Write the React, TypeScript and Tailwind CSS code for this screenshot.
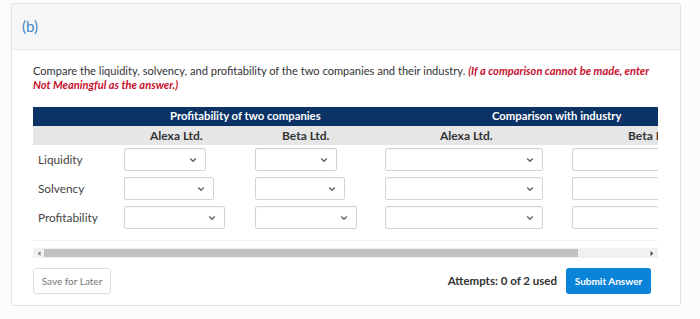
import React from "react";

const rows = [
  { label: "Liquidity", a: 82, b: 82 },
  { label: "Solvency", a: 90, b: 90 },
  { label: "Profitability", a: 101, b: 102 },
];

function Chevron() {
  return (
    <svg width="8" height="6" viewBox="0 0 8 6" className="shrink-0">
      <path d="M1.2 1.5 L4 4.3 L6.8 1.5" fill="none" stroke="#666" strokeWidth="1.4" />
    </svg>
  );
}

function Select({ width, arrow = true }: { width: number; arrow?: boolean }) {
  return (
    <div
      className="h-[23px] border border-[#d4d4d4] rounded-[2px] bg-white flex items-center justify-end pr-[8px] shadow-[inset_0_1px_1px_rgba(0,0,0,0.04)]"
      style={{ width }}
    >
      {arrow && <Chevron />}
    </div>
  );
}

export default function App() {
  return (
    <div
      className="w-[700px] h-[319px] bg-[#fcfcfc] pt-[3px] pl-[11px] overflow-hidden"
      style={{ fontFamily: "Lato, 'Open Sans', sans-serif" }}
    >
      <div className="w-[670px] h-[303px] bg-white border border-[#e3e3e3] rounded-[2px]">
        <div className="h-[46px] bg-[#f6f6f6] border-b border-[#e6e6e6] flex items-center pl-[10px]">
          <span className="text-[15px] text-[#3f86c8]">(b)</span>
        </div>

        <div className="pl-[21px] pt-[14px]">
          <p className="text-[11.1px] leading-[14px] text-[#333] w-[635px]">
            Compare the liquidity, solvency, and profitability of the two companies and their industry.{" "}
            <em className="font-bold text-[#c8102e]">
              (If a comparison cannot be made, enter Not Meaningful as the answer.)
            </em>
          </p>

          <div className="mt-[15px] w-[625px] overflow-hidden">
            <div className="w-[800px]">
              <div className="h-[19px] bg-[#0b3366] text-white text-[11.3px] font-bold flex items-center whitespace-nowrap">
                <div className="w-[459px] pl-[137px]">Profitability of two companies</div>
                <div>Comparison with industry</div>
              </div>
              <div className="h-[19px] bg-[#e6e6e6] text-[#333] text-[12px] font-bold flex items-center whitespace-nowrap">
                <div className="w-[91px]" />
                <div className="w-[131px] pl-[26px]">Alexa Ltd.</div>
                <div className="w-[130px] pl-[27px]">Beta Ltd.</div>
                <div className="w-[187px] pl-[55px]">Alexa Ltd.</div>
                <div className="w-[200px] pl-[56px]">Beta Ltd.</div>
              </div>
              {rows.map((r) => (
                <div key={r.label} className="h-[29px] flex items-center text-[11.8px] text-[#444]">
                  <div className="w-[91px] pl-[5px]">{r.label}</div>
                  <div className="w-[131px]">
                    <Select width={r.a} />
                  </div>
                  <div className="w-[130px]">
                    <Select width={r.b} />
                  </div>
                  <div className="w-[187px]">
                    <Select width={158} />
                  </div>
                  <div className="w-[200px]">
                    <Select width={150} arrow={false} />
                  </div>
                </div>
              ))}
            </div>
          </div>

          <div className="mt-[8px] w-[625px] border-t border-[#f0f0f0]" />

          <div className="mt-[7px] w-[625px] h-[10px] bg-[#f1f1f1] flex items-center">
            <div className="w-[11px] flex justify-center">
              <svg width="4" height="5" viewBox="0 0 4 5">
                <path d="M3.5 0 L0.5 2.5 L3.5 5 Z" fill="#888" />
              </svg>
            </div>
            <div className="w-[534px] h-[8px] bg-[#c1c1c1]" />
            <div className="flex-1 flex justify-end pr-[4px]">
              <svg width="4" height="5" viewBox="0 0 4 5">
                <path d="M0.5 0 L3.5 2.5 L0.5 5 Z" fill="#505050" />
              </svg>
            </div>
          </div>

          <div className="mt-[10px] w-[618px] flex items-center">
            <button className="h-[26px] w-[78px] border border-[#dcdcdc] rounded-[3px] bg-white text-[10px] text-[#777]">
              Save for Later
            </button>
            <div className="flex-1" />
            <span className="text-[11.5px] font-bold text-[#333] mr-[9px]">Attempts: 0 of 2 used</span>
            <button className="h-[26px] w-[85px] rounded-[3px] bg-[#0a84d8] text-[10px] font-bold text-white">
              Submit Answer
            </button>
          </div>
        </div>
      </div>
    </div>
  );
}
